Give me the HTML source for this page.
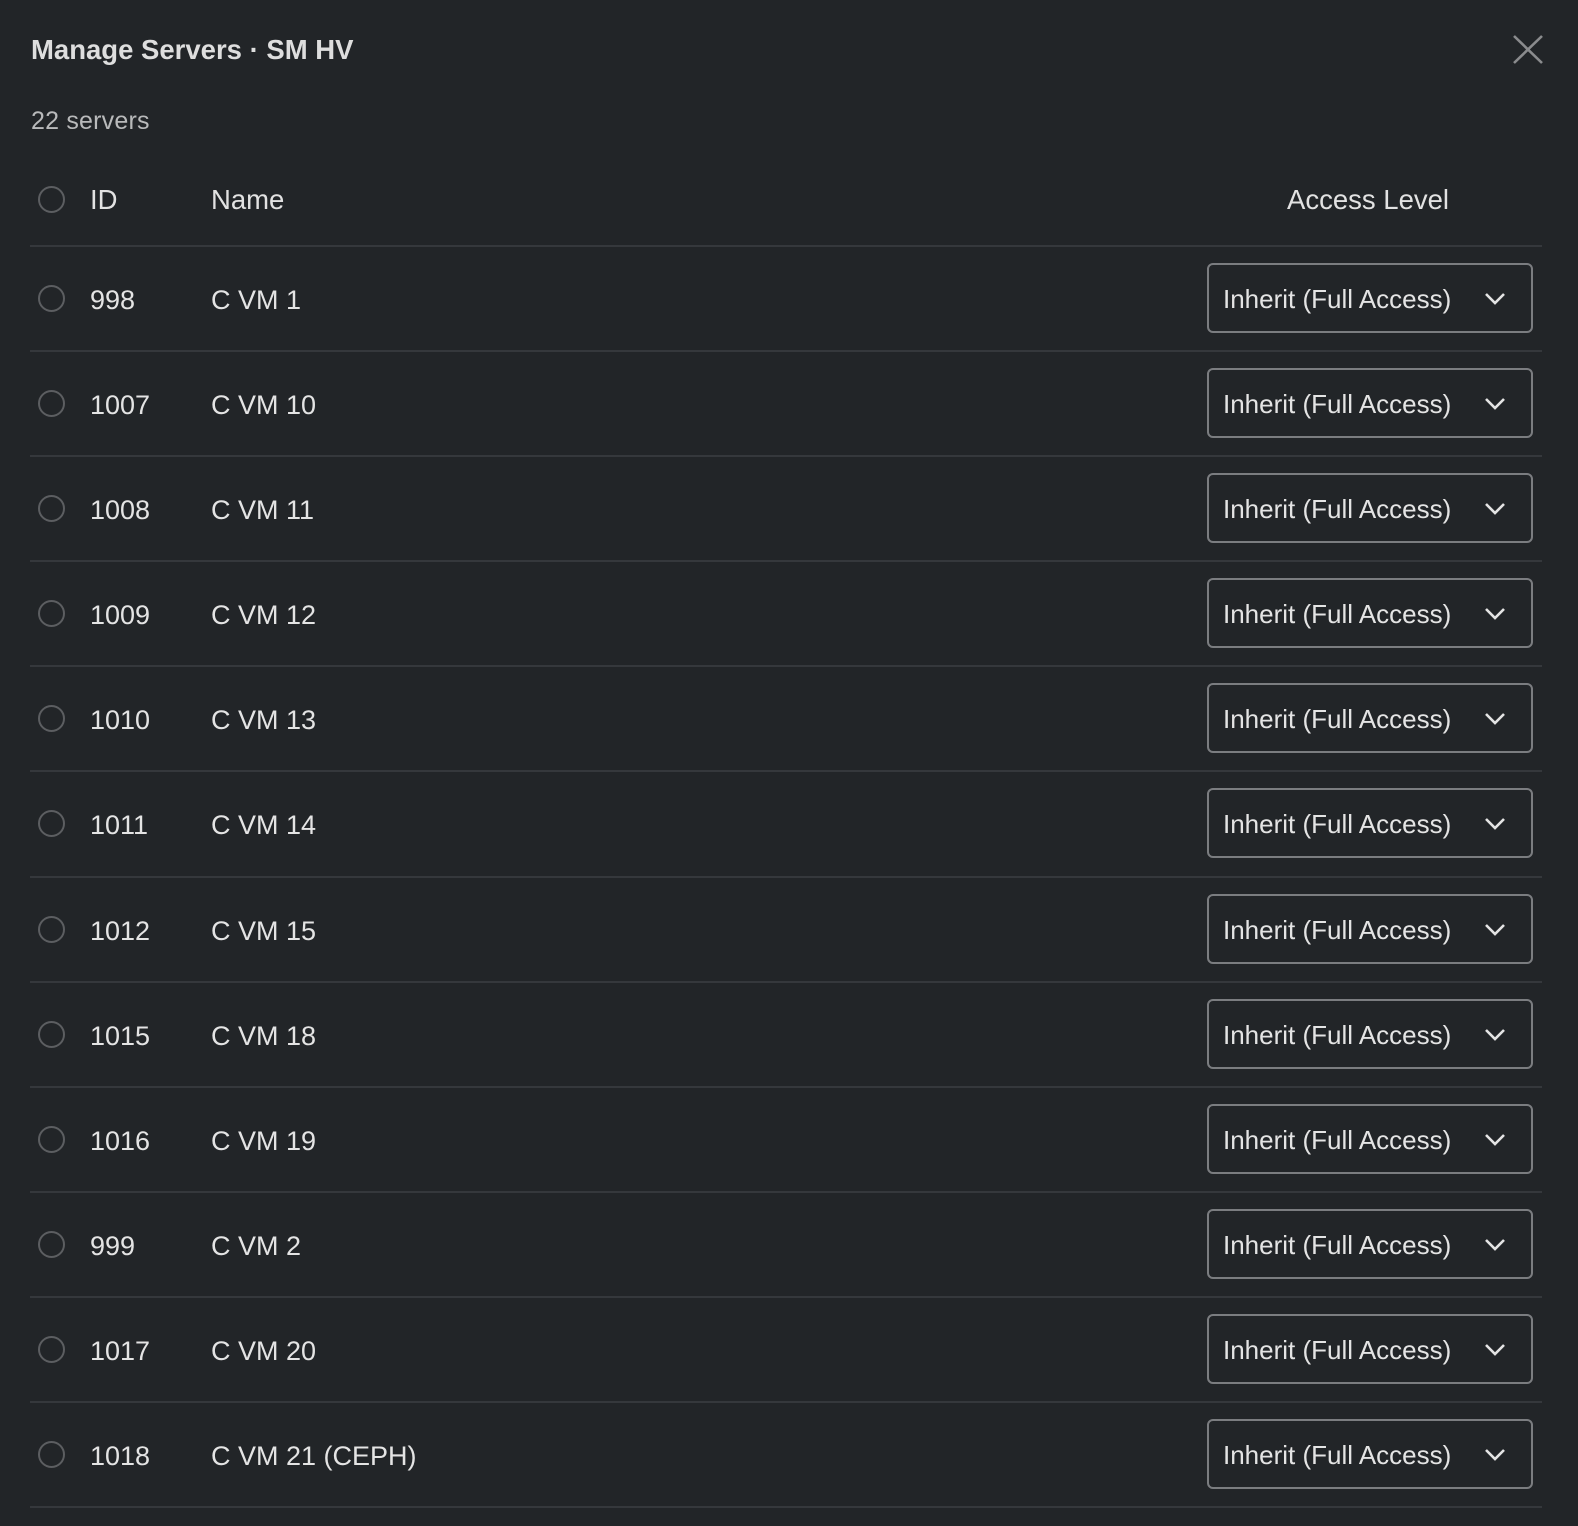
<!DOCTYPE html>
<html><head><meta charset="utf-8"><style>
*{margin:0;padding:0;box-sizing:border-box}
body{width:1578px;height:1526px;background:#222528;font-family:"Liberation Sans",Arial,sans-serif;color:#e4e4e4;position:relative;overflow:hidden}
.abs{position:absolute;white-space:nowrap}
.title{left:31px;top:33px;font-size:27.5px;font-weight:bold;color:#dedede;line-height:34px}
.count{left:31px;top:106px;font-size:25px;color:#b9babb;line-height:30px;letter-spacing:0.2px}
.hd{font-size:27.5px;line-height:34px;top:183px;color:#e2e2e2}
.sep{position:absolute;left:30px;width:1512px;height:2px;background:#35383c}
.radio{position:absolute;left:38px;width:27px;height:27px;border:2px solid #5c5e61;border-radius:50%}
.cell{position:absolute;font-size:27px;line-height:32px;color:#e4e4e4;white-space:nowrap;margin-top:1px}
.sel{position:absolute;left:1207px;width:326px;height:70px;border:2px solid #7b7d80;border-radius:6px}
.sel span{position:absolute;left:14px;top:18px;font-size:26px;line-height:32px;color:#e4e4e4;white-space:nowrap}
.sel svg{position:absolute;left:274px;top:27px}
</style></head><body>
<div class="abs title">Manage Servers · SM HV</div>
<svg class="abs" style="left:1510px;top:32px" width="36" height="36"><path d="M4 4L32 31M32 4L4 31" stroke="#8a8b8d" stroke-width="2.6" fill="none"/></svg>
<div class="abs count">22 servers</div>
<div class="radio" style="top:186px"></div>
<div class="abs hd" style="left:90px">ID</div>
<div class="abs hd" style="left:211px">Name</div>
<div class="abs hd" style="left:1287px">Access Level</div>
<div class="sep" style="top:245px"></div>

<div class="radio" style="top:285px"></div><div class="cell" style="left:90px;top:283px">998</div><div class="cell" style="left:211px;top:283px">C VM 1</div><div class="sel" style="top:263px"><span>Inherit (Full Access)</span><svg width="24" height="14"><path d="M3 2L12 11L21 2" stroke="#e4e4e4" stroke-width="2.6" fill="none"/></svg></div><div class="sep" style="top:350px"></div>

<div class="radio" style="top:390px"></div><div class="cell" style="left:90px;top:388px">1007</div><div class="cell" style="left:211px;top:388px">C VM 10</div><div class="sel" style="top:368px"><span>Inherit (Full Access)</span><svg width="24" height="14"><path d="M3 2L12 11L21 2" stroke="#e4e4e4" stroke-width="2.6" fill="none"/></svg></div><div class="sep" style="top:455px"></div>

<div class="radio" style="top:495px"></div><div class="cell" style="left:90px;top:493px">1008</div><div class="cell" style="left:211px;top:493px">C VM 11</div><div class="sel" style="top:473px"><span>Inherit (Full Access)</span><svg width="24" height="14"><path d="M3 2L12 11L21 2" stroke="#e4e4e4" stroke-width="2.6" fill="none"/></svg></div><div class="sep" style="top:560px"></div>

<div class="radio" style="top:600px"></div><div class="cell" style="left:90px;top:598px">1009</div><div class="cell" style="left:211px;top:598px">C VM 12</div><div class="sel" style="top:578px"><span>Inherit (Full Access)</span><svg width="24" height="14"><path d="M3 2L12 11L21 2" stroke="#e4e4e4" stroke-width="2.6" fill="none"/></svg></div><div class="sep" style="top:665px"></div>

<div class="radio" style="top:705px"></div><div class="cell" style="left:90px;top:703px">1010</div><div class="cell" style="left:211px;top:703px">C VM 13</div><div class="sel" style="top:683px"><span>Inherit (Full Access)</span><svg width="24" height="14"><path d="M3 2L12 11L21 2" stroke="#e4e4e4" stroke-width="2.6" fill="none"/></svg></div><div class="sep" style="top:770px"></div>

<div class="radio" style="top:810px"></div><div class="cell" style="left:90px;top:808px">1011</div><div class="cell" style="left:211px;top:808px">C VM 14</div><div class="sel" style="top:788px"><span>Inherit (Full Access)</span><svg width="24" height="14"><path d="M3 2L12 11L21 2" stroke="#e4e4e4" stroke-width="2.6" fill="none"/></svg></div><div class="sep" style="top:876px"></div>

<div class="radio" style="top:916px"></div><div class="cell" style="left:90px;top:914px">1012</div><div class="cell" style="left:211px;top:914px">C VM 15</div><div class="sel" style="top:894px"><span>Inherit (Full Access)</span><svg width="24" height="14"><path d="M3 2L12 11L21 2" stroke="#e4e4e4" stroke-width="2.6" fill="none"/></svg></div><div class="sep" style="top:981px"></div>

<div class="radio" style="top:1021px"></div><div class="cell" style="left:90px;top:1019px">1015</div><div class="cell" style="left:211px;top:1019px">C VM 18</div><div class="sel" style="top:999px"><span>Inherit (Full Access)</span><svg width="24" height="14"><path d="M3 2L12 11L21 2" stroke="#e4e4e4" stroke-width="2.6" fill="none"/></svg></div><div class="sep" style="top:1086px"></div>

<div class="radio" style="top:1126px"></div><div class="cell" style="left:90px;top:1124px">1016</div><div class="cell" style="left:211px;top:1124px">C VM 19</div><div class="sel" style="top:1104px"><span>Inherit (Full Access)</span><svg width="24" height="14"><path d="M3 2L12 11L21 2" stroke="#e4e4e4" stroke-width="2.6" fill="none"/></svg></div><div class="sep" style="top:1191px"></div>

<div class="radio" style="top:1231px"></div><div class="cell" style="left:90px;top:1229px">999</div><div class="cell" style="left:211px;top:1229px">C VM 2</div><div class="sel" style="top:1209px"><span>Inherit (Full Access)</span><svg width="24" height="14"><path d="M3 2L12 11L21 2" stroke="#e4e4e4" stroke-width="2.6" fill="none"/></svg></div><div class="sep" style="top:1296px"></div>

<div class="radio" style="top:1336px"></div><div class="cell" style="left:90px;top:1334px">1017</div><div class="cell" style="left:211px;top:1334px">C VM 20</div><div class="sel" style="top:1314px"><span>Inherit (Full Access)</span><svg width="24" height="14"><path d="M3 2L12 11L21 2" stroke="#e4e4e4" stroke-width="2.6" fill="none"/></svg></div><div class="sep" style="top:1401px"></div>

<div class="radio" style="top:1441px"></div><div class="cell" style="left:90px;top:1439px">1018</div><div class="cell" style="left:211px;top:1439px">C VM 21 (CEPH)</div><div class="sel" style="top:1419px"><span>Inherit (Full Access)</span><svg width="24" height="14"><path d="M3 2L12 11L21 2" stroke="#e4e4e4" stroke-width="2.6" fill="none"/></svg></div><div class="sep" style="top:1506px"></div>
</body></html>
